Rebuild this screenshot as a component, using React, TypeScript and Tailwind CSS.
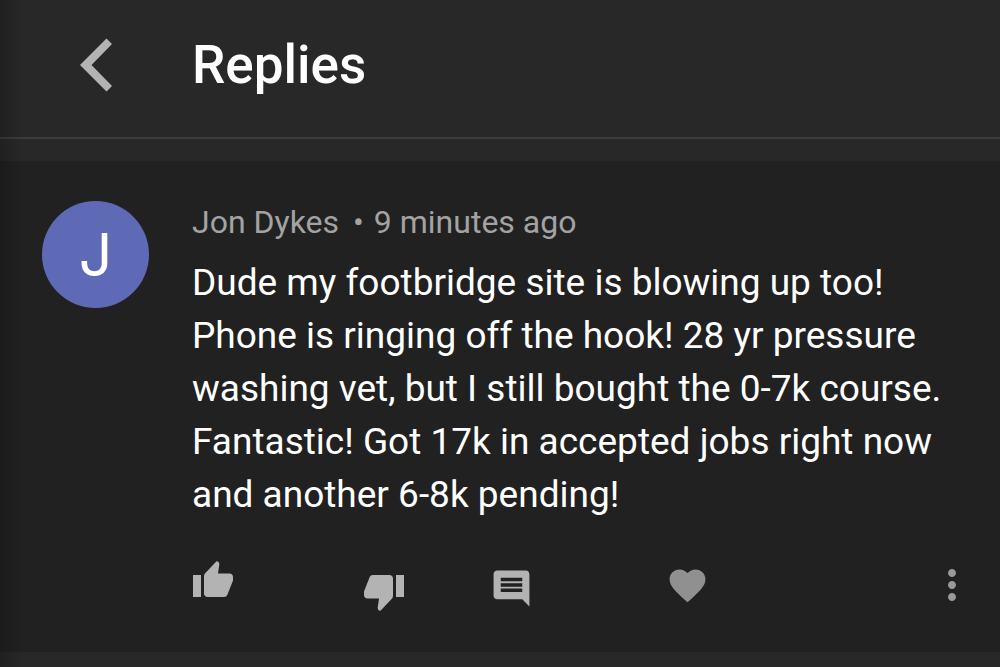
import { MdComment, MdFavorite, MdMoreVert } from 'react-icons/md';

const comment = {
  author: 'Jon Dykes',
  time: '9 minutes ago',
  text: 'Dude my footbridge site is blowing up too! Phone is ringing off the hook! 28 yr pressure washing vet, but I still bought the 0-7k course. Fantastic! Got 17k in accepted jobs right now and another 6-8k pending!',
};

function ChevronIcon() {
  return (
    <svg viewBox="0 0 32 54" className="h-[54px] w-8" fill="currentColor" aria-hidden="true">
      <path d="M26.5 .5L32 6 11.5 27 32 48 26.5 53.5 0 27z" />
    </svg>
  );
}

function ThumbIcon({ className }: { className?: string }) {
  return (
    <svg viewBox="0 0 40 36" className={className} fill="currentColor" aria-hidden="true">
      <path d="M0 14h8v22H0z" />
      <path d="M23.3.4C24.5-.3 26.5 1.2 26.3 3.5L25 12.5H36.5C38.6 12.5 40 14 40 16V19.5L34.5 33.5C33.8 35.2 32.8 36 31 36H14.5C12.5 36 11 34.5 11 32.5V15.5C11 14 11.4 13 12.4 12z" />
    </svg>
  );
}

export default function App() {
  return (
    <div className="relative min-h-screen bg-[#282828] font-['Roboto',sans-serif] text-white">
      {/* Header */}
      <header className="flex h-[139px] items-start border-b-2 border-[#3c3c3c] pt-[33px] pl-16">
        <button aria-label="Back" className="mr-16 flex h-16 w-16 items-center justify-center text-[#b3b3b3]">
          <ChevronIcon />
        </button>
        <h1 className="text-[53px] leading-16 font-medium">Replies</h1>
      </header>

      {/* Comment */}
      <article className="mt-[22px] flex bg-[#212121] pt-10 pr-10 pb-8 pl-[42px]">
        <div className="mr-[43px] flex h-[107px] w-[107px] shrink-0 items-center justify-center rounded-full bg-[#5f6ab7] font-['Inter',sans-serif] text-[59px] leading-none">
          J
        </div>
        <div className="flex-1">
          <p className="flex text-[32px] leading-[42px] text-[#a3a3a3]">
            <span>{comment.author}</span>
            <span className="pr-2.5 pl-3.5">•</span>
            <time>{comment.time}</time>
          </p>
          <p className="mt-[13px] text-[37px] leading-[53px]">{comment.text}</p>

          {/* Actions */}
          <div className="mt-10 ml-px flex h-[59px] items-start text-[#b3b3b3]">
            <button aria-label="Like" className="mr-[131px]">
              <ThumbIcon className="h-9 w-10" />
            </button>
            <button aria-label="Dislike" className="mr-[86px] pt-3.5">
              <ThumbIcon className="h-9 w-10 rotate-180" />
            </button>
            <button aria-label="Reply" className="mr-[133px] pt-1.5">
              <MdComment className="h-[43px] w-[43px]" />
            </button>
            <button aria-label="Heart" className="pt-[3px] text-[#909090]">
              <MdFavorite className="h-[43px] w-[43px]" />
            </button>
            <button aria-label="More options" className="-mr-4 ml-auto text-[#999999]">
              <MdMoreVert className="h-12 w-12" />
            </button>
          </div>
        </div>
      </article>

      {/* Edge shadow */}
      <div className="pointer-events-none absolute inset-y-0 left-0 w-6 bg-gradient-to-r from-black/20 to-transparent" />
    </div>
  );
}
